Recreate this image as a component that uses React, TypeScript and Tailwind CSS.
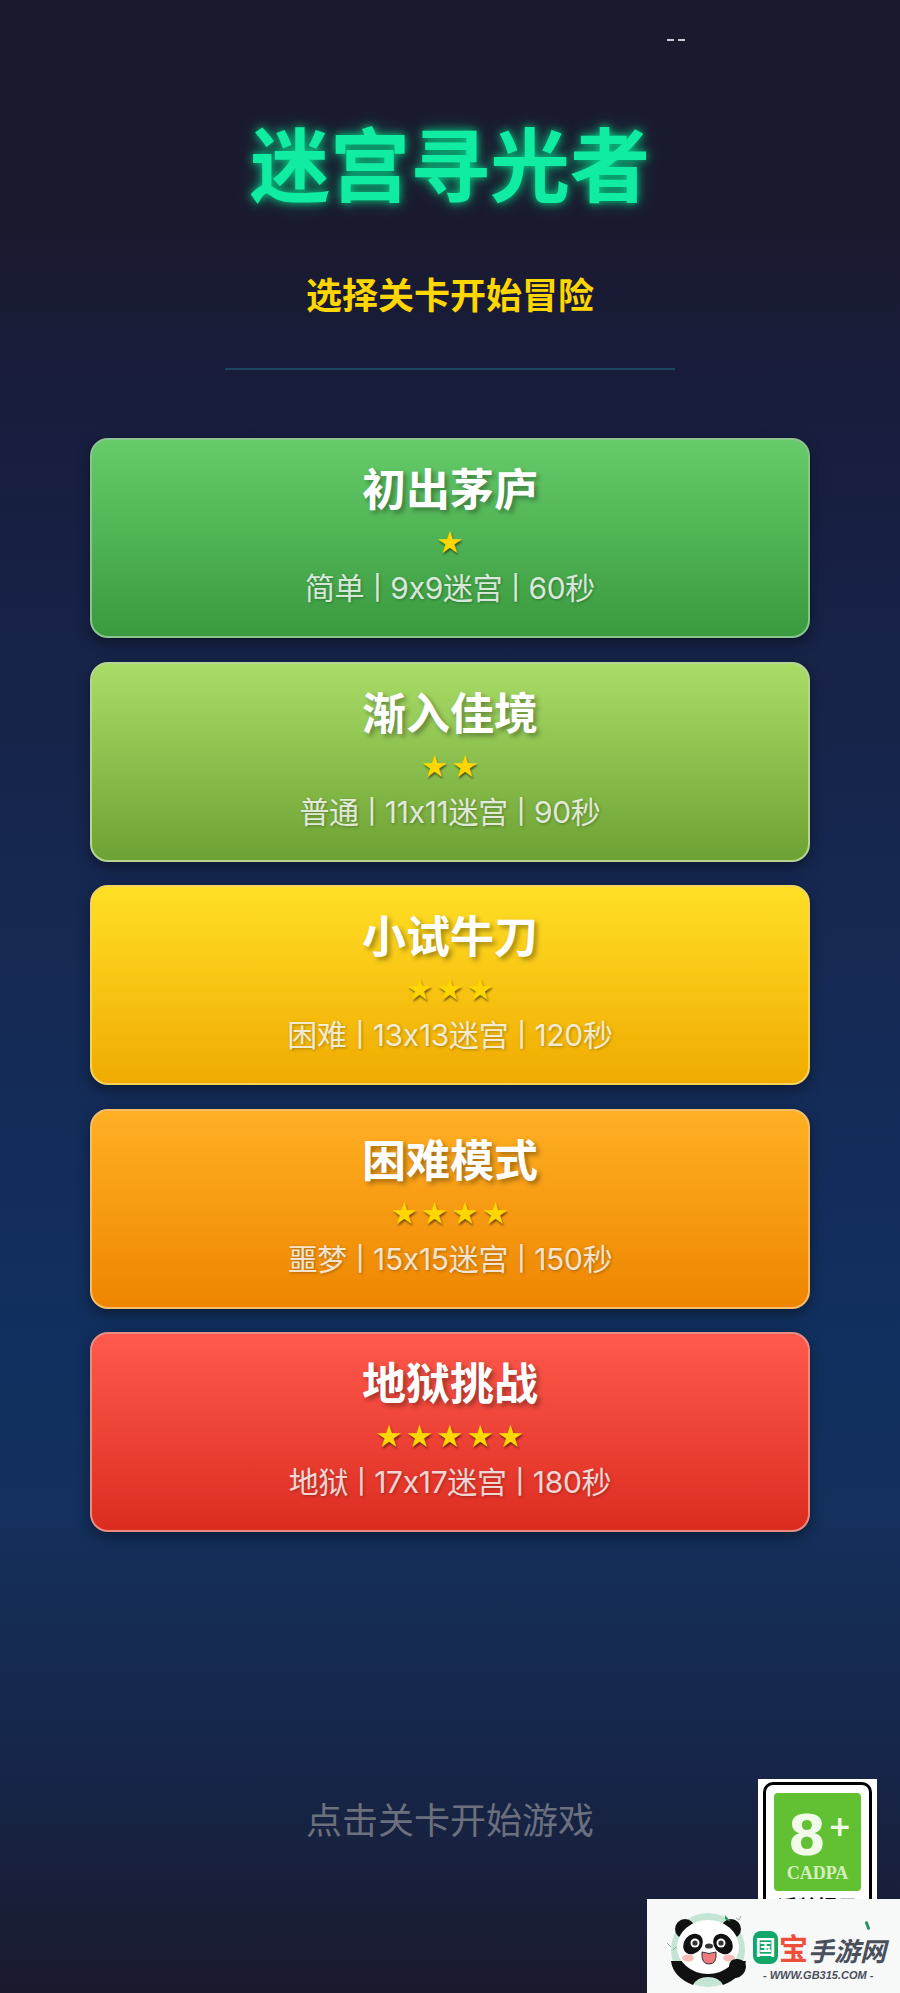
const levels = [
  {
    name: "初出茅庐",
    stars: "★",
    info: ["简单", "9x9迷宫", "60秒"],
    bg: "bg-[linear-gradient(180deg,#66cb6a,#399a3e)]",
    border: "border-[#8cc48f]",
  },
  {
    name: "渐入佳境",
    stars: "★★",
    info: ["普通", "11x11迷宫", "90秒"],
    bg: "bg-[linear-gradient(180deg,#a9dd67,#6da234)]",
    border: "border-[#b7d492]",
  },
  {
    name: "小试牛刀",
    stars: "★★★",
    info: ["困难", "13x13迷宫", "120秒"],
    bg: "bg-[linear-gradient(180deg,#ffdf26,#f0ab00)]",
    border: "border-[#f2d35e]",
  },
  {
    name: "困难模式",
    stars: "★★★★",
    info: ["噩梦", "15x15迷宫", "150秒"],
    bg: "bg-[linear-gradient(180deg,#ffb024,#ee8500)]",
    border: "border-[#f5bd68]",
  },
  {
    name: "地狱挑战",
    stars: "★★★★★",
    info: ["地狱", "17x17迷宫", "180秒"],
    bg: "bg-[linear-gradient(180deg,#ff5a4c,#dc2c20)]",
    border: "border-[#e98d84]",
  },
];

function LevelCard({ name, stars, info, bg, border }: (typeof levels)[number]) {
  return (
    <button
      type="button"
      className={`flex h-[200px] w-full flex-col items-center rounded-[18px] border-2 pt-[15px] shadow-[0_5px_14px_rgba(0,0,0,0.4)] ${bg} ${border}`}
    >
      <span className="text-[44px] leading-[64px] font-bold text-white [text-shadow:3px_3px_5px_rgba(0,0,0,0.35)]">
        {name}
      </span>
      <span className="mt-[3px] pl-[5px] text-[25px] leading-[36px] tracking-[5.4px] text-[#ffd700] [text-shadow:1px_2px_2px_rgba(0,0,0,0.5)]">
        {stars}
      </span>
      <span className="mt-[6px] flex items-center gap-[9px] font-['Inter','Noto_Sans_CJK_SC',sans-serif] text-[30px] leading-[48px] tracking-[-0.3px] text-white/80 [text-shadow:1px_1px_3px_rgba(0,0,0,0.3)]">
        {info.map((part, i) => (
          <span key={part} className="flex items-center gap-[9px]">
            {i > 0 && <span className="text-[24px] font-medium">|</span>}
            {part}
          </span>
        ))}
      </span>
    </button>
  );
}

function AgeBadge() {
  return (
    <div className="absolute top-[1779px] left-[758px] h-[150px] w-[119px] bg-white px-[5px] pt-[3px]">
      <div className="h-full rounded-[10px] border-[3px] border-black px-[8px] pt-[8px]">
        <div className="flex h-[98px] flex-col items-center rounded-[4px] bg-[#62c133]">
          <div className="mt-[17px] flex h-[50px] items-start pl-[4px] font-['DejaVu_Sans',sans-serif] font-bold text-[#f2fbe9]">
            <span className="text-[55px] leading-[50px]">8</span>
            <span className="mt-[2px] ml-[2px] text-[28px] leading-[30px]">+</span>
          </div>
          <span className="mt-[3px] font-['Liberation_Serif',serif] text-[18px] leading-[20px] font-bold text-[#d6efbe]">
            CADPA
          </span>
        </div>
        <div className="mt-[4px] text-center text-[20px] leading-[24px] font-bold whitespace-nowrap text-black">适龄提示</div>
      </div>
    </div>
  );
}

function Panda() {
  return (
    <svg viewBox="0 0 93 88" className="h-[88px] w-[93px] shrink-0">
      <circle cx="48" cy="45" r="37" fill="#c4e5d3" />
      <circle cx="25" cy="24" r="10" fill="#111" />
      <circle cx="71" cy="24" r="10" fill="#111" />
      <path d="M11 56q2 16 22 24q4-8 15-8t15 8q20-8 23-24z" fill="#111" />
      <ellipse cx="48" cy="42" rx="31" ry="27" fill="#fff" />
      <ellipse cx="33" cy="39" rx="9" ry="11" fill="#111" transform="rotate(38 33 39)" />
      <ellipse cx="63" cy="39" rx="9" ry="11" fill="#111" transform="rotate(-38 63 39)" />
      <circle cx="35" cy="38" r="4.5" fill="#fff" />
      <circle cx="61" cy="38" r="4.5" fill="#fff" />
      <circle cx="35" cy="38" r="2.6" fill="#333" />
      <circle cx="61" cy="38" r="2.6" fill="#333" />
      <ellipse cx="49" cy="41" rx="4" ry="2.6" fill="#333" />
      <path d="M42 47q7 3 14 0q1 12-7 12t-7-12z" fill="#ef7a80" stroke="#333" strokeWidth="1" />
      <ellipse cx="28" cy="53" rx="6" ry="3.5" fill="#f7bdb6" />
      <ellipse cx="69" cy="53" rx="6" ry="3.5" fill="#f7bdb6" />
      <path d="M69 61q1-8 9-7t8 8q-1 9-10 11q-8-4-7-12z" fill="#111" />
      <path d="M65 10l6 7l-6-3z" fill="#2f8f5b" />
      <path d="M76 13l3 2l2-4" fill="none" stroke="#8a9a90" strokeWidth="0.8" />
      <path d="M7 38l4 4M16 42l-3 3" fill="none" stroke="#7a9a88" strokeWidth="0.8" />
    </svg>
  );
}

function Watermark() {
  return (
    <div className="absolute top-[1899px] left-[647px] flex h-[94px] w-[253px] items-start bg-[#f7f8f8] pt-[6px] pl-[13px]">
      <Panda />
      <div className="relative mt-[24px] flex flex-col whitespace-nowrap">
        <div className="flex h-[36px] items-center font-bold">
          <span className="flex h-[33px] w-[25px] items-center justify-center rounded-[8px] bg-[#12a66a] text-[20px] text-white">国</span>
          <span className="ml-[1px] text-[29px] leading-[36px] text-[#ee4f3a]">宝</span>
          <span className="mt-[5px] text-[26px] leading-[32px] text-[#4a4f5c] italic">手游网</span>
        </div>
        <div className="mt-[2px] pl-[10px] font-['Liberation_Sans',sans-serif] text-[11px] leading-[16px] font-bold text-[#4a4f5c] italic">
          - WWW.GB315.COM -
        </div>
        <div className="absolute -top-[8px] left-[113px] h-[9px] w-[3px] rotate-[-20deg] rounded-full bg-[#2f8f5b]" />
      </div>
    </div>
  );
}

export default function App() {
  return (
    <div className="relative h-[1993px] overflow-hidden bg-[linear-gradient(180deg,#1a1a2e_0%,#1a1a2e_11%,#181d3d_20%,#152a55_50%,#11305f_68%,#14305c_76%,#16264a_88%,#1a1a2e_100%)] font-['Noto_Sans_CJK_SC','Noto_Sans',sans-serif]">
      <div className="absolute top-[39px] left-[667px] h-[2px] w-[7px] bg-[#c8c8d0]" />
      <div className="absolute top-[39px] left-[678px] h-[2px] w-[7px] bg-[#c8c8d0]" />

      <header className="flex flex-col items-center pt-[110px]">
        <h1 className="text-[80px] leading-[100px] font-bold text-[#10eca2] [text-shadow:0_0_8px_rgba(0,255,157,0.75),0_0_18px_rgba(0,255,157,0.35)]">
          迷宫寻光者
        </h1>
        <p className="mt-[57px] text-[36px] leading-[52px] font-bold text-[#ffd700]">选择关卡开始冒险</p>
        <div className="mt-[49px] h-[2px] w-[450px] bg-[#1e4560]" />
      </header>

      <main className="mt-[68px] flex flex-col gap-[23.5px] pr-[90px] pl-[90px]">
        {levels.map((level) => (
          <LevelCard key={level.name} {...level} />
        ))}
      </main>

      <p className="mt-[260px] text-center text-[36px] leading-[52px] text-[#6a707e]">
        点击关卡开始游戏
      </p>

      <AgeBadge />
      <Watermark />
    </div>
  );
}
